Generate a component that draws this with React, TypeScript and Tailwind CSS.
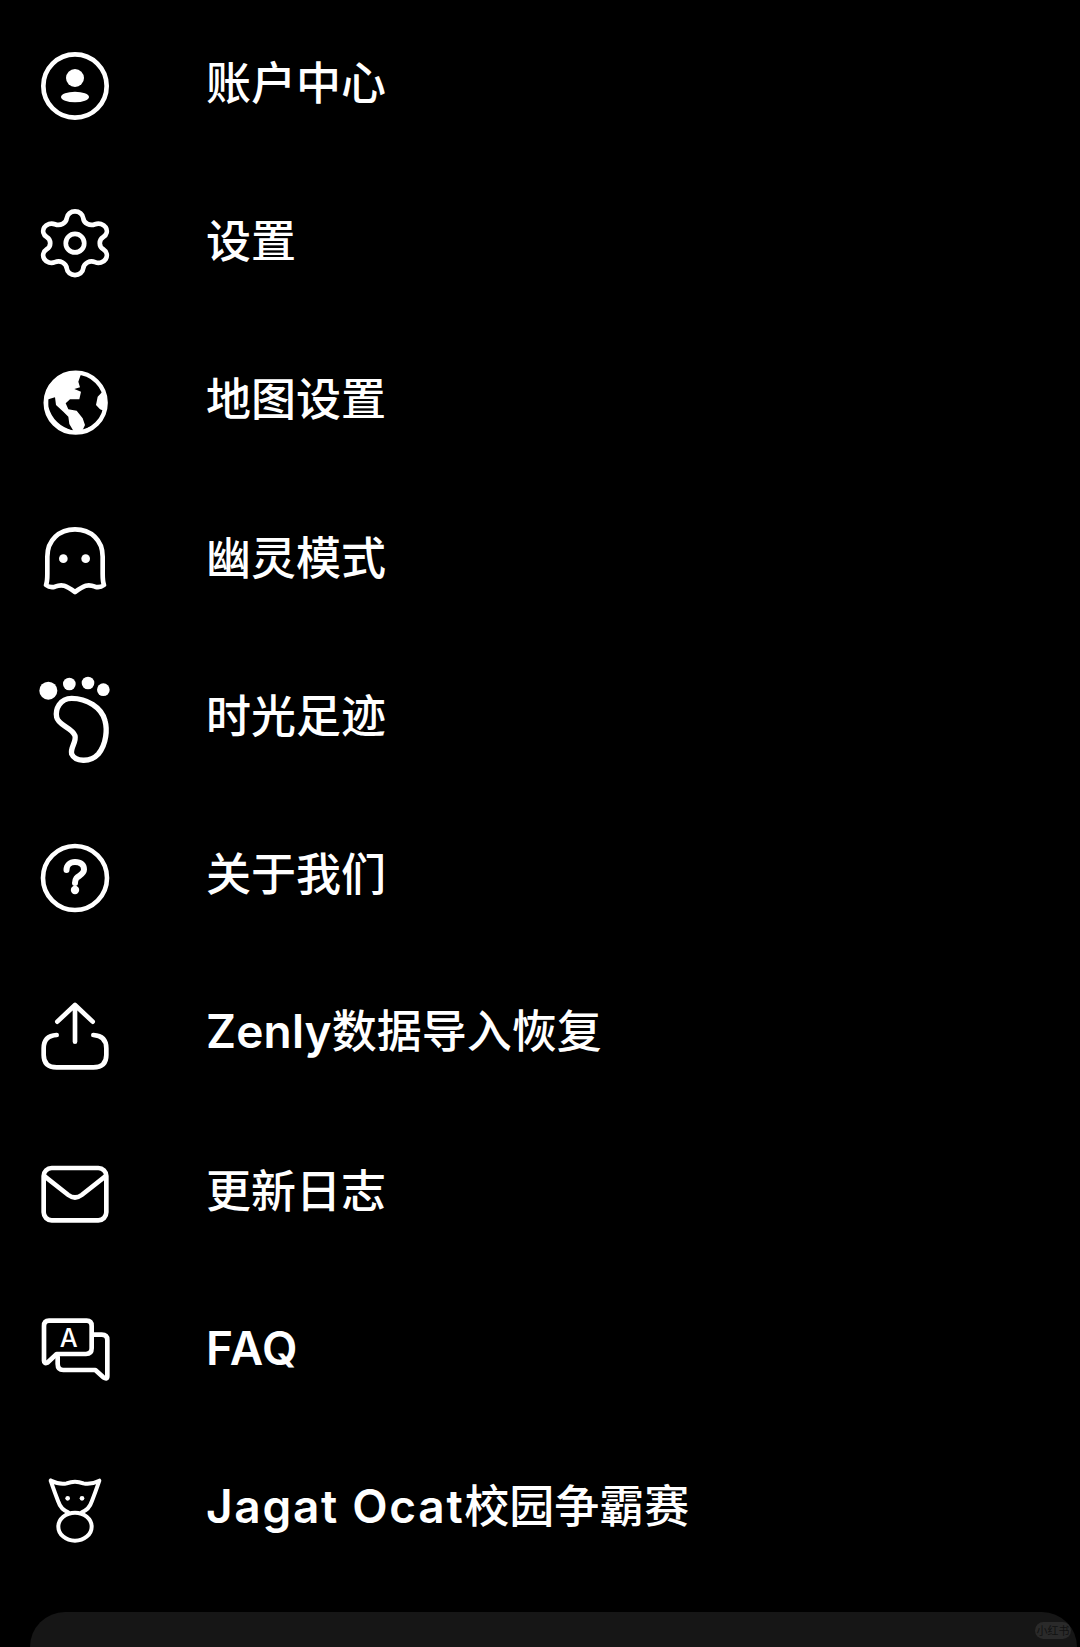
import type { ReactNode } from "react";

const stroke = {
  fill: "none",
  stroke: "white",
  strokeLinecap: "round",
  strokeLinejoin: "round",
} as const;

function Icon({ box, stretch, children }: { box: string; stretch?: boolean; children: ReactNode }) {
  return (
    <svg
      width="110"
      height="110"
      viewBox={box}
      preserveAspectRatio={stretch ? "none" : undefined}
      className="block"
    >
      {children}
    </svg>
  );
}

const AccountIcon = (
  <Icon box="-165 -165 330 330">
    <circle r="95" strokeWidth="14" {...stroke} />
    <circle cy="-24" r="27" fill="white" />
    <ellipse cy="33" rx="42" ry="16" fill="white" />
  </Icon>
);

// the lucide gear is taller than wide, the one in the picture is square
const GearIcon = (
  <Icon box="-3.5 -5 31 34.5" stretch>
    <path
      {...stroke}
      strokeWidth="4.7"
      vectorEffect="non-scaling-stroke"
      d="M9.671 4.136a2.34 2.34 0 0 1 4.659 0 2.34 2.34 0 0 0 3.319 1.915 2.34 2.34 0 0 1 2.33 4.033 2.34 2.34 0 0 0 0 3.831 2.34 2.34 0 0 1-2.33 4.033 2.34 2.34 0 0 0-3.319 1.915 2.34 2.34 0 0 1-4.659 0 2.34 2.34 0 0 0-3.32-1.915 2.34 2.34 0 0 1-2.33-4.033 2.34 2.34 0 0 0 0-3.831A2.34 2.34 0 0 1 6.35 6.051a2.34 2.34 0 0 0 3.319-1.915"
    />
    <ellipse
      cx="12"
      cy="12"
      rx="2.6"
      ry="2.9"
      strokeWidth="4.7"
      vectorEffect="non-scaling-stroke"
      {...stroke}
    />
  </Icon>
);

const GlobeIcon = (
  <Icon box="0 -6 330 330">
    <circle cx="167" cy="158" r="90" fill="white" />
    <path
      fill="black"
      d="M182 75 L205 72 Q236 84 250 122 L233 140 L228 165 L240 178 L253 183 Q240 222 188 240 L195 225 L188 205 L170 182 L145 178 L137 160 L150 148 L178 148 L183 125 L163 117 L180 112 L175 95 Z"
    />
    <path
      fill="black"
      d="M85 148 L105 142 L108 165 L130 185 L145 200 L148 222 L160 242 Q100 225 85 170 Z"
    />
    <circle cx="167" cy="158" r="90" fill="none" stroke="white" strokeWidth="13" />
  </Icon>
);

const GhostIcon = (
  <Icon box="60 18 330 330">
    <path
      {...stroke}
      strokeWidth="14"
      d="M142 170 C142 120 178 88 225 88 C272 88 308 120 308 170 V222 Q308 245 312 255 Q300 264 285 260 Q270 254 258 257 Q245 262 225 276 Q205 262 192 257 Q180 254 165 260 Q150 264 138 255 Q142 245 142 222 Z"
    />
    <circle cx="190" cy="176" r="13" fill="white" />
    <circle cx="257" cy="176" r="13" fill="white" />
  </Icon>
);

const FootIcon = (
  <Icon box="0 15 330 330">
    <circle cx="85" cy="95" r="27" fill="white" />
    <circle cx="148" cy="75" r="19" fill="white" />
    <circle cx="204" cy="72" r="19" fill="white" />
    <circle cx="250" cy="92" r="19" fill="white" />
    <path
      {...stroke}
      strokeWidth="16"
      d="M155 118 C120 118 105 150 110 175 C115 200 155 205 165 230 C170 250 150 265 155 285 C165 308 210 312 235 285 C260 255 262 210 255 185 C245 145 200 118 155 118 Z"
    />
  </Icon>
);

const HelpIcon = (
  <Icon box="-55 -55 110 110">
    <circle r="32" strokeWidth="4.6" {...stroke} />
    <path
      {...stroke}
      strokeWidth="6"
      d="M-8.5 -8 C-8.5 -13 -5 -16 0 -16 C6 -16 9 -13 9 -8.5 C9 -4 4 -2.5 1.5 0 Q0 2 0 5"
    />
    <circle cy="12" r="4.2" fill="white" />
  </Icon>
);

const UploadIcon = (
  <Icon box="60 3 330 330">
    <path {...stroke} strokeWidth="14" d="M225 75 V185 M172 125 L225 75 L278 125" />
    <path
      {...stroke}
      strokeWidth="14"
      d="M170 165 Q131 167 131 205 V225 Q131 262 170 262 H280 Q319 262 319 225 V205 Q319 167 280 165"
    />
  </Icon>
);

const MailIcon = (
  <Icon box="60 477 330 330">
    <rect x="131" y="564" width="188" height="157" rx="24" strokeWidth="14" {...stroke} />
    <path {...stroke} strokeWidth="14" d="M135 590 L205 645 Q225 660 245 645 L315 590" />
  </Icon>
);

const FaqIcon = (
  <Icon box="0 -6 330 330">
    <path
      {...stroke}
      strokeWidth="14"
      d="M87 62 H200 Q215 62 215 78 V145 Q215 162 198 162 H110 L82 188 Q72 192 72 182 V78 Q72 62 87 62 Z"
    />
    <path
      {...stroke}
      strokeWidth="14"
      d="M222 104 H245 Q262 104 262 120 V228 Q262 240 250 232 L226 210 H130 Q113 210 113 192 V170"
    />
    <text
      x="146"
      y="140"
      textAnchor="middle"
      fontSize="76"
      fontWeight="500"
      fill="white"
      fontFamily="Inter, sans-serif"
    >
      A
    </text>
  </Icon>
);

const CatIcon = (
  <Icon box="0 -12 330 330">
    <path
      {...stroke}
      strokeWidth="12"
      d="M92 62 Q120 75 140 70 Q165 60 190 70 Q212 75 238 62 Q225 100 215 125 Q208 148 185 157 M92 62 Q105 100 115 125 Q122 148 145 157"
    />
    <ellipse cx="165" cy="200" rx="50" ry="42" strokeWidth="12" {...stroke} />
    <circle cx="143" cy="115" r="7" fill="white" />
    <circle cx="186" cy="115" r="7" fill="white" />
  </Icon>
);

const rows: { icon: ReactNode; label: ReactNode }[] = [
  { icon: AccountIcon, label: "账户中心" },
  { icon: GearIcon, label: "设置" },
  { icon: GlobeIcon, label: "地图设置" },
  { icon: GhostIcon, label: "幽灵模式" },
  { icon: FootIcon, label: "时光足迹" },
  { icon: HelpIcon, label: "关于我们" },
  {
    icon: UploadIcon,
    label: (
      <>
        <span className="font-['Inter',sans-serif] text-[46px] font-semibold tracking-[0.2px]">Zenly</span>
        数据导入恢复
      </>
    ),
  },
  { icon: MailIcon, label: "更新日志" },
  {
    icon: FaqIcon,
    label: <span className="font-['Inter',sans-serif] text-[46px] font-semibold tracking-[0.8px]">FAQ</span>,
  },
  {
    icon: CatIcon,
    label: (
      <>
        <span className="font-['Inter',sans-serif] text-[46px] font-semibold tracking-[1.7px]">Jagat Ocat</span>
        校园争霸赛
      </>
    ),
  },
];

export default function App() {
  return (
    <div className="flex h-[1647px] flex-col overflow-hidden bg-black pt-[1px] text-white">
      <ul className="flex flex-col">
        {rows.map((row, i) => (
          <li key={i} className="flex h-[158.33px] items-center pl-[20px]">
            <div className="mt-[12px] shrink-0">{row.icon}</div>
            <span className="ml-[76px] whitespace-nowrap font-['Noto_Sans_CJK_SC',sans-serif] text-[45px] font-medium leading-none">
              {row.label}
            </span>
          </li>
        ))}
      </ul>
      <div className="ml-[30px] mr-[3px] mt-[28px] flex flex-1 items-start justify-end rounded-t-[50px] bg-[#161616] pr-[6px] pt-[10px]">
        <span className="flex h-[17px] w-[36px] items-center justify-center rounded-full bg-[#2a2a2a] font-['Noto_Sans_CJK_SC',sans-serif] text-[11px] leading-none text-[#111111]">
          小红书
        </span>
      </div>
    </div>
  );
}
